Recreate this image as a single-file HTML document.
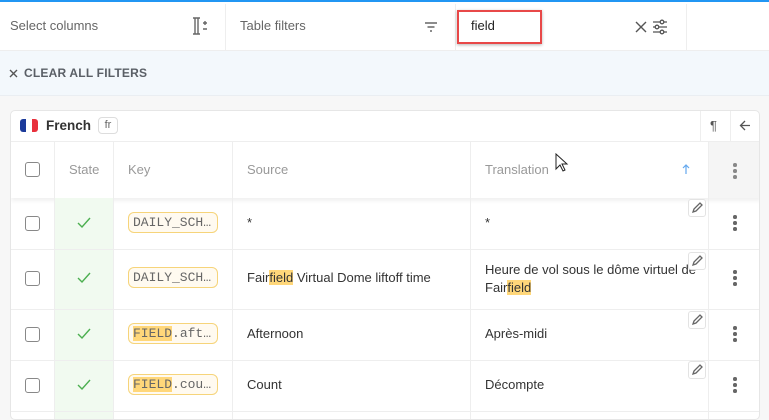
<!DOCTYPE html>
<html><head><meta charset="utf-8"><style>
*{box-sizing:border-box;margin:0;padding:0}
body{width:769px;height:413px;overflow:hidden;background:#f7f7f7;font-family:"Liberation Sans",sans-serif;position:relative;color:#333}
.a{position:absolute}
.top{left:0;top:0;width:769px;height:51px;background:#fff;border-top:2px solid #2196f3;border-bottom:1px solid #eee}
.vl{position:absolute;top:2px;height:49px;width:1px;background:#eee}
.t{font-size:13px;color:#666}
.band{left:0;top:51px;width:769px;height:45px;background:#f3f8fc;border-bottom:1px solid #eaeef2}
.card{left:10px;top:110px;width:750px;height:310px;background:#fff;border:1px solid #e6e6e6;border-radius:5px;overflow:hidden}
.hl{background:#ffd77a}
.cb{width:15px;height:15px;border:1.5px solid #888;border-radius:3px;background:#fff}
.chip{height:21px;width:90px;border:1px solid #f6d47a;background:#fffaf0;border-radius:6px;font-family:"Liberation Mono",monospace;font-size:13px;color:#666;padding:2px 0 0 4px;white-space:nowrap;overflow:hidden}
.cell{font-size:13px;color:#333}
.pen{width:18px;height:18px;border:1px solid #e3e3e3;border-radius:3px;background:#fff}
.dots{width:4px}
.dots i{display:block;width:3.5px;height:3.5px;border-radius:50%;background:#666;margin-bottom:2.5px}
.hd{font-size:13px;color:#999}
</style></head><body>
<div class="a top">
 <div class="a t" style="left:10px;top:16px">Select columns</div>
 <svg class="a" style="left:191px;top:15px" width="22" height="18" viewBox="0 0 22 18" fill="none" stroke="#666" stroke-width="1.4"><path d="M2 1h7M2 17h7M4 1v16M7 1v16"/><path d="M12 6h4M14 4v4M12 12h4" /></svg>
 <div class="vl" style="left:225px"></div>
 <div class="a t" style="left:240px;top:16px">Table filters</div>
 <svg class="a" style="left:424px;top:19px" width="14" height="12" stroke="#666" stroke-width="1.4"><path d="M1 2h12M3.5 6h7M6 10h2"/></svg>
 <div class="vl" style="left:455px"></div>
 <div class="a" style="left:457px;top:8px;width:85px;height:34px;border:2px solid #e84848;box-shadow:0 1px 3px rgba(0,0,0,.3);background:#fff"></div>
 <div class="a" style="left:471px;top:16px;font-size:13px;color:#222">field</div>
 <svg class="a" style="left:635px;top:19px" width="12" height="12" stroke="#555" stroke-width="1.4"><path d="M1 1l10 10M11 1L1 11"/></svg>
 <svg class="a" style="left:652px;top:17px" width="16" height="16" fill="none" stroke="#555" stroke-width="1.3"><path d="M1 3h14M1 8h14M1 13h14"/><circle cx="10" cy="3" r="1.8" fill="#fff"/><circle cx="5" cy="8" r="1.8" fill="#fff"/><circle cx="10" cy="13" r="1.8" fill="#fff"/></svg>
 <div class="vl" style="left:686px"></div>
</div>
<div class="a band">
 <svg class="a" style="left:9px;top:18px" width="9" height="9" stroke="#555" stroke-width="1.4"><path d="M1 1l7 7M8 1L1 8"/></svg>
 <div class="a" style="left:24px;top:15px;font-size:12px;font-weight:bold;color:#5a5f66;letter-spacing:.2px">CLEAR ALL FILTERS</div>
</div>
<div class="a card">
 <div class="a" style="left:9px;top:8px;width:18px;height:13px;border-radius:3px;overflow:hidden;display:flex"><i style="flex:1;background:#1b3a9a"></i><i style="flex:1;background:#fff"></i><i style="flex:1;background:#e8303c"></i></div>
 <div class="a" style="left:35px;top:7px;font-size:13.5px;font-weight:bold;color:#333">French</div>
 <div class="a" style="left:87px;top:6px;width:20px;height:17px;border:1px solid #ddd;border-radius:4px;font-size:11px;color:#666;text-align:center;line-height:14px">fr</div>
 <div class="a" style="left:689px;top:0;width:1px;height:30px;background:#eee"></div>
 <div class="a" style="left:719px;top:0;width:1px;height:30px;background:#eee"></div>
 <div class="a" style="left:699px;top:7px;font-size:13px;color:#555">¶</div>
 <svg class="a" style="left:728px;top:9px" width="12" height="11" stroke="#555" stroke-width="1.3" fill="none"><path d="M11 5.5H2M6 1L1.5 5.5 6 10"/></svg>
 <div class="a" style="left:0;top:30px;width:750px;height:1px;background:#eee"></div>
 <div class="a" style="left:0;top:31px;width:750px;height:56px;background:#fff;box-shadow:0 3px 4px rgba(0,0,0,.06)"></div>
 <div class="a" style="left:697px;top:31px;width:53px;height:56px;background:#f5f5f5;border-left:1px solid #eee"></div>
 <div class="a" style="left:43px;top:87px;width:59px;height:230px;background:#f1faf0"></div>
 <div class="a" style="left:43px;top:31px;width:1px;height:290px;background:#eee"></div>
 <div class="a" style="left:102px;top:31px;width:1px;height:290px;background:#eee"></div>
 <div class="a" style="left:221px;top:31px;width:1px;height:290px;background:#eee"></div>
 <div class="a" style="left:459px;top:31px;width:1px;height:290px;background:#eee"></div>
 <div class="a" style="left:697px;top:87px;width:1px;height:230px;background:#eee"></div>
 <div class="a cb" style="left:14px;top:51px"></div>
 <div class="a hd" style="left:58px;top:51px">State</div>
 <div class="a hd" style="left:117px;top:51px">Key</div>
 <div class="a hd" style="left:236px;top:51px">Source</div>
 <div class="a hd" style="left:474px;top:51px">Translation</div>
 <svg class="a" style="left:671px;top:53px" width="8" height="10" stroke="#64a8ee" stroke-width="1.2" fill="none"><path d="M4 10V1M1 4l3-3 3 3"/></svg>
 <div class="a dots" style="left:722px;top:52px"><i style="background:#888"></i><i style="background:#888"></i><i style="background:#888"></i></div>
 <div class="a" style="left:0;top:138px;width:750px;height:1px;background:#eee"></div>
 <div class="a" style="left:0;top:198px;width:750px;height:1px;background:#eee"></div>
 <div class="a" style="left:0;top:249px;width:750px;height:1px;background:#eee"></div>
 <div class="a" style="left:0;top:300px;width:750px;height:1px;background:#eee"></div>

 <div class="a cb" style="left:14px;top:105px"></div>
 <svg class="a" style="left:66px;top:106px" width="14" height="11" stroke="#4caf50" stroke-width="1.4" fill="none"><path d="M1 6l4 4 8-9"/></svg>
 <div class="a chip" style="left:117px;top:101px">DAILY_SCH…</div>
 <div class="a cell" style="left:236px;top:104px">*</div>
 <div class="a cell" style="left:474px;top:104px">*</div>
 <div class="a pen" style="left:677px;top:88px"></div>
 <div class="a dots" style="left:722px;top:104px"><i></i><i></i><i></i></div>

 <div class="a cb" style="left:14px;top:160px"></div>
 <svg class="a" style="left:66px;top:161px" width="14" height="11" stroke="#4caf50" stroke-width="1.4" fill="none"><path d="M1 6l4 4 8-9"/></svg>
 <div class="a chip" style="left:117px;top:156px">DAILY_SCH…</div>
 <div class="a cell" style="left:236px;top:159px">Fair<span class="hl">field</span> Virtual Dome liftoff time</div>
 <div class="a cell" style="left:474px;top:150px;line-height:18px;width:225px">Heure de vol sous le dôme virtuel de Fair<span class="hl">field</span></div>
 <div class="a pen" style="left:677px;top:141px"></div>
 <div class="a dots" style="left:722px;top:159px"><i></i><i></i><i></i></div>

 <div class="a cb" style="left:14px;top:216px"></div>
 <svg class="a" style="left:66px;top:217px" width="14" height="11" stroke="#4caf50" stroke-width="1.4" fill="none"><path d="M1 6l4 4 8-9"/></svg>
 <div class="a chip" style="left:117px;top:212px"><span class="hl">FIELD</span>.aft…</div>
 <div class="a cell" style="left:236px;top:215px">Afternoon</div>
 <div class="a cell" style="left:474px;top:215px">Après-midi</div>
 <div class="a pen" style="left:677px;top:200px"></div>
 <div class="a dots" style="left:722px;top:215px"><i></i><i></i><i></i></div>

 <div class="a cb" style="left:14px;top:267px"></div>
 <svg class="a" style="left:66px;top:268px" width="14" height="11" stroke="#4caf50" stroke-width="1.4" fill="none"><path d="M1 6l4 4 8-9"/></svg>
 <div class="a chip" style="left:117px;top:263px"><span class="hl">FIELD</span>.cou…</div>
 <div class="a cell" style="left:236px;top:266px">Count</div>
 <div class="a cell" style="left:474px;top:266px">Décompte</div>
 <div class="a pen" style="left:677px;top:250px"></div>
 <div class="a dots" style="left:722px;top:266px"><i></i><i></i><i></i></div>
</div>
<svg class="a" style="left:691px;top:202px" width="12" height="12" stroke="#666" stroke-width="1.3" fill="none"><path d="M2 10l1-3 6-6 2 2-6 6z"/></svg>
<svg class="a" style="left:691px;top:255px" width="12" height="12" stroke="#666" stroke-width="1.3" fill="none"><path d="M2 10l1-3 6-6 2 2-6 6z"/></svg>
<svg class="a" style="left:691px;top:314px" width="12" height="12" stroke="#666" stroke-width="1.3" fill="none"><path d="M2 10l1-3 6-6 2 2-6 6z"/></svg>
<svg class="a" style="left:691px;top:364px" width="12" height="12" stroke="#666" stroke-width="1.3" fill="none"><path d="M2 10l1-3 6-6 2 2-6 6z"/></svg>
<svg class="a" style="left:555px;top:153px" width="14" height="20" viewBox="0 0 14 20"><path d="M1 1v15l4-4 3 6 2-1-3-6h5z" fill="#fff" stroke="#222" stroke-width="1"/></svg>
</body></html>
